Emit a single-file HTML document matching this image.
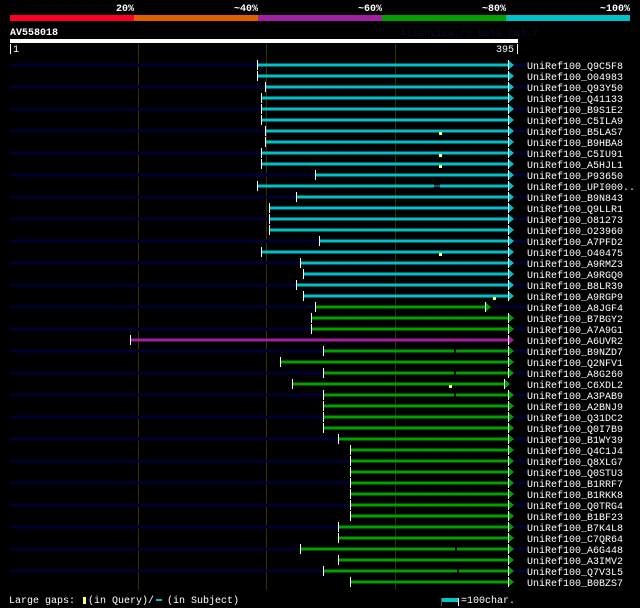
<!DOCTYPE html>
<html><head><meta charset="utf-8"><style>
html,body{margin:0;padding:0;background:#000;}
svg{display:block}
text{font-family:"Liberation Mono",monospace;font-size:10px;fill:#fff}
.b{font-weight:bold}
</style></head><body>
<svg width="640" height="608" xmlns="http://www.w3.org/2000/svg">
<rect width="640" height="608" fill="#000"/>
<text class="b" x="134" y="11" text-anchor="end">20%</text>
<text class="b" x="258" y="11" text-anchor="end">~40%</text>
<text class="b" x="382" y="11" text-anchor="end">~60%</text>
<text class="b" x="506" y="11" text-anchor="end">~80%</text>
<text class="b" x="630" y="11" text-anchor="end">~100%</text>
<rect x="10" y="15" width="124" height="6" fill="#ff0022"/>
<rect x="134" y="15" width="124" height="6" fill="#e06000"/>
<rect x="258" y="15" width="124" height="6" fill="#a020a0"/>
<rect x="382" y="15" width="124" height="6" fill="#00a000"/>
<rect x="506" y="15" width="124" height="6" fill="#00c0c8"/>
<text class="b" x="10" y="35">AV558018</text>
<text x="400" y="36" style="fill:#0a0a2a">AlignView.rn Beta rel.7</text>
<rect x="10" y="39" width="508" height="4" fill="#fff"/>
<rect x="10" y="44" width="1" height="10" fill="#fff"/>
<text x="13" y="52">1</text>
<text x="496" y="52">395</text>
<rect x="517" y="44" width="1" height="10" fill="#fff"/>
<g fill="#333300">
<rect x="138" y="44" width="1" height="546"/>
<rect x="266" y="44" width="1" height="546"/>
<rect x="395" y="44" width="1" height="546"/>
</g>
<g>
<rect x="10" y="63.5" width="247" height="3" fill="#000033"/><rect x="514" y="63.5" width="13" height="3" fill="#000033"/><rect x="257" y="63.5" width="251" height="3" fill="#00c0c8"/><polygon points="508,60 514,65 508,70" fill="#00c0c8"/><rect x="257" y="60" width="1" height="10" fill="#fff"/><rect x="508" y="60" width="1" height="10" fill="#fff"/><text x="527" y="69">UniRef100_Q9C5F8</text>
<rect x="257" y="74.5" width="251" height="3" fill="#00c0c8"/><polygon points="508,71 514,76 508,81" fill="#00c0c8"/><rect x="257" y="71" width="1" height="10" fill="#fff"/><rect x="508" y="71" width="1" height="10" fill="#fff"/><text x="527" y="80">UniRef100_O04983</text>
<rect x="10" y="85.5" width="255" height="3" fill="#000033"/><rect x="514" y="85.5" width="13" height="3" fill="#000033"/><rect x="265" y="85.5" width="243" height="3" fill="#00c0c8"/><polygon points="508,82 514,87 508,92" fill="#00c0c8"/><rect x="265" y="82" width="1" height="10" fill="#fff"/><rect x="508" y="82" width="1" height="10" fill="#fff"/><text x="527" y="91">UniRef100_Q93Y50</text>
<rect x="261" y="96.5" width="247" height="3" fill="#00c0c8"/><polygon points="508,93 514,98 508,103" fill="#00c0c8"/><rect x="261" y="93" width="1" height="10" fill="#fff"/><rect x="508" y="93" width="1" height="10" fill="#fff"/><text x="527" y="102">UniRef100_Q41133</text>
<rect x="10" y="107.5" width="251" height="3" fill="#000033"/><rect x="514" y="107.5" width="13" height="3" fill="#000033"/><rect x="261" y="107.5" width="247" height="3" fill="#00c0c8"/><polygon points="508,104 514,109 508,114" fill="#00c0c8"/><rect x="261" y="104" width="1" height="10" fill="#fff"/><rect x="508" y="104" width="1" height="10" fill="#fff"/><text x="527" y="113">UniRef100_B9S1E2</text>
<rect x="261" y="118.5" width="247" height="3" fill="#00c0c8"/><polygon points="508,115 514,120 508,125" fill="#00c0c8"/><rect x="261" y="115" width="1" height="10" fill="#fff"/><rect x="508" y="115" width="1" height="10" fill="#fff"/><text x="527" y="124">UniRef100_C5ILA9</text>
<rect x="10" y="129.5" width="255" height="3" fill="#000033"/><rect x="514" y="129.5" width="13" height="3" fill="#000033"/><rect x="265" y="129.5" width="243" height="3" fill="#00c0c8"/><polygon points="508,126 514,131 508,136" fill="#00c0c8"/><rect x="265" y="126" width="1" height="10" fill="#fff"/><rect x="508" y="126" width="1" height="10" fill="#fff"/><text x="527" y="135">UniRef100_B5LAS7</text>
<rect x="265" y="140.5" width="243" height="3" fill="#00c0c8"/><polygon points="508,137 514,142 508,147" fill="#00c0c8"/><rect x="265" y="137" width="1" height="10" fill="#fff"/><rect x="508" y="137" width="1" height="10" fill="#fff"/><text x="527" y="146">UniRef100_B9HBA8</text>
<rect x="10" y="151.5" width="251" height="3" fill="#000033"/><rect x="514" y="151.5" width="13" height="3" fill="#000033"/><rect x="261" y="151.5" width="247" height="3" fill="#00c0c8"/><polygon points="508,148 514,153 508,158" fill="#00c0c8"/><rect x="261" y="148" width="1" height="10" fill="#fff"/><rect x="508" y="148" width="1" height="10" fill="#fff"/><text x="527" y="157">UniRef100_C5IU91</text>
<rect x="261" y="162.5" width="247" height="3" fill="#00c0c8"/><polygon points="508,159 514,164 508,169" fill="#00c0c8"/><rect x="261" y="159" width="1" height="10" fill="#fff"/><rect x="508" y="159" width="1" height="10" fill="#fff"/><text x="527" y="168">UniRef100_A5HJL1</text>
<rect x="10" y="173.5" width="305" height="3" fill="#000033"/><rect x="514" y="173.5" width="13" height="3" fill="#000033"/><rect x="315" y="173.5" width="193" height="3" fill="#00c0c8"/><polygon points="508,170 514,175 508,180" fill="#00c0c8"/><rect x="315" y="170" width="1" height="10" fill="#fff"/><rect x="508" y="170" width="1" height="10" fill="#fff"/><text x="527" y="179">UniRef100_P93650</text>
<rect x="257" y="184.5" width="251" height="3" fill="#00c0c8"/><polygon points="508,181 514,186 508,191" fill="#00c0c8"/><rect x="257" y="181" width="1" height="10" fill="#fff"/><rect x="508" y="181" width="1" height="10" fill="#fff"/><text x="527" y="190">UniRef100_UPI000..</text>
<rect x="10" y="195.5" width="286" height="3" fill="#000033"/><rect x="514" y="195.5" width="13" height="3" fill="#000033"/><rect x="296" y="195.5" width="212" height="3" fill="#00c0c8"/><polygon points="508,192 514,197 508,202" fill="#00c0c8"/><rect x="296" y="192" width="1" height="10" fill="#fff"/><rect x="508" y="192" width="1" height="10" fill="#fff"/><text x="527" y="201">UniRef100_B9N843</text>
<rect x="269" y="206.5" width="239" height="3" fill="#00c0c8"/><polygon points="508,203 514,208 508,213" fill="#00c0c8"/><rect x="269" y="203" width="1" height="10" fill="#fff"/><rect x="508" y="203" width="1" height="10" fill="#fff"/><text x="527" y="212">UniRef100_Q9LLR1</text>
<rect x="10" y="217.5" width="259" height="3" fill="#000033"/><rect x="514" y="217.5" width="13" height="3" fill="#000033"/><rect x="269" y="217.5" width="239" height="3" fill="#00c0c8"/><polygon points="508,214 514,219 508,224" fill="#00c0c8"/><rect x="269" y="214" width="1" height="10" fill="#fff"/><rect x="508" y="214" width="1" height="10" fill="#fff"/><text x="527" y="223">UniRef100_O81273</text>
<rect x="269" y="228.5" width="239" height="3" fill="#00c0c8"/><polygon points="508,225 514,230 508,235" fill="#00c0c8"/><rect x="269" y="225" width="1" height="10" fill="#fff"/><rect x="508" y="225" width="1" height="10" fill="#fff"/><text x="527" y="234">UniRef100_O23960</text>
<rect x="10" y="239.5" width="309" height="3" fill="#000033"/><rect x="514" y="239.5" width="13" height="3" fill="#000033"/><rect x="319" y="239.5" width="189" height="3" fill="#00c0c8"/><polygon points="508,236 514,241 508,246" fill="#00c0c8"/><rect x="319" y="236" width="1" height="10" fill="#fff"/><rect x="508" y="236" width="1" height="10" fill="#fff"/><text x="527" y="245">UniRef100_A7PFD2</text>
<rect x="261" y="250.5" width="247" height="3" fill="#00c0c8"/><polygon points="508,247 514,252 508,257" fill="#00c0c8"/><rect x="261" y="247" width="1" height="10" fill="#fff"/><rect x="508" y="247" width="1" height="10" fill="#fff"/><text x="527" y="256">UniRef100_O40475</text>
<rect x="10" y="261.5" width="290" height="3" fill="#000033"/><rect x="514" y="261.5" width="13" height="3" fill="#000033"/><rect x="300" y="261.5" width="208" height="3" fill="#00c0c8"/><polygon points="508,258 514,263 508,268" fill="#00c0c8"/><rect x="300" y="258" width="1" height="10" fill="#fff"/><rect x="508" y="258" width="1" height="10" fill="#fff"/><text x="527" y="267">UniRef100_A9RMZ3</text>
<rect x="303" y="272.5" width="205" height="3" fill="#00c0c8"/><polygon points="508,269 514,274 508,279" fill="#00c0c8"/><rect x="303" y="269" width="1" height="10" fill="#fff"/><rect x="508" y="269" width="1" height="10" fill="#fff"/><text x="527" y="278">UniRef100_A9RGQ0</text>
<rect x="10" y="283.5" width="286" height="3" fill="#000033"/><rect x="514" y="283.5" width="13" height="3" fill="#000033"/><rect x="296" y="283.5" width="212" height="3" fill="#00c0c8"/><polygon points="508,280 514,285 508,290" fill="#00c0c8"/><rect x="296" y="280" width="1" height="10" fill="#fff"/><rect x="508" y="280" width="1" height="10" fill="#fff"/><text x="527" y="289">UniRef100_B8LR39</text>
<rect x="303" y="294.5" width="205" height="3" fill="#00c0c8"/><polygon points="508,291 514,296 508,301" fill="#00c0c8"/><rect x="303" y="291" width="1" height="10" fill="#fff"/><rect x="508" y="291" width="1" height="10" fill="#fff"/><text x="527" y="300">UniRef100_A9RGP9</text>
<rect x="10" y="305.5" width="305" height="3" fill="#000033"/><rect x="491" y="305.5" width="36" height="3" fill="#000033"/><rect x="315" y="305.5" width="170" height="3" fill="#00a000"/><polygon points="485,302 491,307 485,312" fill="#00a000"/><rect x="315" y="302" width="1" height="10" fill="#fff"/><rect x="485" y="302" width="1" height="10" fill="#fff"/><text x="527" y="311">UniRef100_A8JGF4</text>
<rect x="311" y="316.5" width="197" height="3" fill="#00a000"/><polygon points="508,313 514,318 508,323" fill="#00a000"/><rect x="311" y="313" width="1" height="10" fill="#fff"/><rect x="508" y="313" width="1" height="10" fill="#fff"/><text x="527" y="322">UniRef100_B7BGY2</text>
<rect x="10" y="327.5" width="301" height="3" fill="#000033"/><rect x="514" y="327.5" width="13" height="3" fill="#000033"/><rect x="311" y="327.5" width="197" height="3" fill="#00a000"/><polygon points="508,324 514,329 508,334" fill="#00a000"/><rect x="311" y="324" width="1" height="10" fill="#fff"/><rect x="508" y="324" width="1" height="10" fill="#fff"/><text x="527" y="333">UniRef100_A7A9G1</text>
<rect x="130" y="338.5" width="378" height="3" fill="#a020a0"/><polygon points="508,335 514,340 508,345" fill="#a020a0"/><rect x="130" y="335" width="1" height="10" fill="#fff"/><rect x="508" y="335" width="1" height="10" fill="#fff"/><text x="527" y="344">UniRef100_A6UVR2</text>
<rect x="10" y="349.5" width="313" height="3" fill="#000033"/><rect x="514" y="349.5" width="13" height="3" fill="#000033"/><rect x="323" y="349.5" width="185" height="3" fill="#00a000"/><polygon points="508,346 514,351 508,356" fill="#00a000"/><rect x="323" y="346" width="1" height="10" fill="#fff"/><rect x="508" y="346" width="1" height="10" fill="#fff"/><text x="527" y="355">UniRef100_B9NZD7</text>
<rect x="280" y="360.5" width="228" height="3" fill="#00a000"/><polygon points="508,357 514,362 508,367" fill="#00a000"/><rect x="280" y="357" width="1" height="10" fill="#fff"/><rect x="508" y="357" width="1" height="10" fill="#fff"/><text x="527" y="366">UniRef100_Q2NFV1</text>
<rect x="10" y="371.5" width="313" height="3" fill="#000033"/><rect x="514" y="371.5" width="13" height="3" fill="#000033"/><rect x="323" y="371.5" width="185" height="3" fill="#00a000"/><polygon points="508,368 514,373 508,378" fill="#00a000"/><rect x="323" y="368" width="1" height="10" fill="#fff"/><rect x="508" y="368" width="1" height="10" fill="#fff"/><text x="527" y="377">UniRef100_A8G260</text>
<rect x="292" y="382.5" width="212" height="3" fill="#00a000"/><polygon points="504,379 510,384 504,389" fill="#00a000"/><rect x="292" y="379" width="1" height="10" fill="#fff"/><rect x="504" y="379" width="1" height="10" fill="#fff"/><text x="527" y="388">UniRef100_C6XDL2</text>
<rect x="10" y="393.5" width="313" height="3" fill="#000033"/><rect x="514" y="393.5" width="13" height="3" fill="#000033"/><rect x="323" y="393.5" width="185" height="3" fill="#00a000"/><polygon points="508,390 514,395 508,400" fill="#00a000"/><rect x="323" y="390" width="1" height="10" fill="#fff"/><rect x="508" y="390" width="1" height="10" fill="#fff"/><text x="527" y="399">UniRef100_A3PAB9</text>
<rect x="323" y="404.5" width="185" height="3" fill="#00a000"/><polygon points="508,401 514,406 508,411" fill="#00a000"/><rect x="323" y="401" width="1" height="10" fill="#fff"/><rect x="508" y="401" width="1" height="10" fill="#fff"/><text x="527" y="410">UniRef100_A2BNJ9</text>
<rect x="10" y="415.5" width="313" height="3" fill="#000033"/><rect x="514" y="415.5" width="13" height="3" fill="#000033"/><rect x="323" y="415.5" width="185" height="3" fill="#00a000"/><polygon points="508,412 514,417 508,422" fill="#00a000"/><rect x="323" y="412" width="1" height="10" fill="#fff"/><rect x="508" y="412" width="1" height="10" fill="#fff"/><text x="527" y="421">UniRef100_Q31DC2</text>
<rect x="323" y="426.5" width="185" height="3" fill="#00a000"/><polygon points="508,423 514,428 508,433" fill="#00a000"/><rect x="323" y="423" width="1" height="10" fill="#fff"/><rect x="508" y="423" width="1" height="10" fill="#fff"/><text x="527" y="432">UniRef100_Q0I7B9</text>
<rect x="10" y="437.5" width="328" height="3" fill="#000033"/><rect x="514" y="437.5" width="13" height="3" fill="#000033"/><rect x="338" y="437.5" width="170" height="3" fill="#00a000"/><polygon points="508,434 514,439 508,444" fill="#00a000"/><rect x="338" y="434" width="1" height="10" fill="#fff"/><rect x="508" y="434" width="1" height="10" fill="#fff"/><text x="527" y="443">UniRef100_B1WY39</text>
<rect x="350" y="448.5" width="158" height="3" fill="#00a000"/><polygon points="508,445 514,450 508,455" fill="#00a000"/><rect x="350" y="445" width="1" height="10" fill="#fff"/><rect x="508" y="445" width="1" height="10" fill="#fff"/><text x="527" y="454">UniRef100_Q4C1J4</text>
<rect x="10" y="459.5" width="340" height="3" fill="#000033"/><rect x="514" y="459.5" width="13" height="3" fill="#000033"/><rect x="350" y="459.5" width="158" height="3" fill="#00a000"/><polygon points="508,456 514,461 508,466" fill="#00a000"/><rect x="350" y="456" width="1" height="10" fill="#fff"/><rect x="508" y="456" width="1" height="10" fill="#fff"/><text x="527" y="465">UniRef100_Q8XLG7</text>
<rect x="350" y="470.5" width="158" height="3" fill="#00a000"/><polygon points="508,467 514,472 508,477" fill="#00a000"/><rect x="350" y="467" width="1" height="10" fill="#fff"/><rect x="508" y="467" width="1" height="10" fill="#fff"/><text x="527" y="476">UniRef100_Q0STU3</text>
<rect x="10" y="481.5" width="340" height="3" fill="#000033"/><rect x="514" y="481.5" width="13" height="3" fill="#000033"/><rect x="350" y="481.5" width="158" height="3" fill="#00a000"/><polygon points="508,478 514,483 508,488" fill="#00a000"/><rect x="350" y="478" width="1" height="10" fill="#fff"/><rect x="508" y="478" width="1" height="10" fill="#fff"/><text x="527" y="487">UniRef100_B1RRF7</text>
<rect x="350" y="492.5" width="158" height="3" fill="#00a000"/><polygon points="508,489 514,494 508,499" fill="#00a000"/><rect x="350" y="489" width="1" height="10" fill="#fff"/><rect x="508" y="489" width="1" height="10" fill="#fff"/><text x="527" y="498">UniRef100_B1RKK8</text>
<rect x="10" y="503.5" width="340" height="3" fill="#000033"/><rect x="514" y="503.5" width="13" height="3" fill="#000033"/><rect x="350" y="503.5" width="158" height="3" fill="#00a000"/><polygon points="508,500 514,505 508,510" fill="#00a000"/><rect x="350" y="500" width="1" height="10" fill="#fff"/><rect x="508" y="500" width="1" height="10" fill="#fff"/><text x="527" y="509">UniRef100_Q0TRG4</text>
<rect x="350" y="514.5" width="158" height="3" fill="#00a000"/><polygon points="508,511 514,516 508,521" fill="#00a000"/><rect x="350" y="511" width="1" height="10" fill="#fff"/><rect x="508" y="511" width="1" height="10" fill="#fff"/><text x="527" y="520">UniRef100_B1BF23</text>
<rect x="10" y="525.5" width="328" height="3" fill="#000033"/><rect x="514" y="525.5" width="13" height="3" fill="#000033"/><rect x="338" y="525.5" width="170" height="3" fill="#00a000"/><polygon points="508,522 514,527 508,532" fill="#00a000"/><rect x="338" y="522" width="1" height="10" fill="#fff"/><rect x="508" y="522" width="1" height="10" fill="#fff"/><text x="527" y="531">UniRef100_B7K4L8</text>
<rect x="338" y="536.5" width="170" height="3" fill="#00a000"/><polygon points="508,533 514,538 508,543" fill="#00a000"/><rect x="338" y="533" width="1" height="10" fill="#fff"/><rect x="508" y="533" width="1" height="10" fill="#fff"/><text x="527" y="542">UniRef100_C7QR64</text>
<rect x="10" y="547.5" width="290" height="3" fill="#000033"/><rect x="514" y="547.5" width="13" height="3" fill="#000033"/><rect x="300" y="547.5" width="208" height="3" fill="#00a000"/><polygon points="508,544 514,549 508,554" fill="#00a000"/><rect x="300" y="544" width="1" height="10" fill="#fff"/><rect x="508" y="544" width="1" height="10" fill="#fff"/><text x="527" y="553">UniRef100_A6G448</text>
<rect x="338" y="558.5" width="170" height="3" fill="#00a000"/><polygon points="508,555 514,560 508,565" fill="#00a000"/><rect x="338" y="555" width="1" height="10" fill="#fff"/><rect x="508" y="555" width="1" height="10" fill="#fff"/><text x="527" y="564">UniRef100_A3IMV2</text>
<rect x="10" y="569.5" width="313" height="3" fill="#000033"/><rect x="514" y="569.5" width="13" height="3" fill="#000033"/><rect x="323" y="569.5" width="185" height="3" fill="#00a000"/><polygon points="508,566 514,571 508,576" fill="#00a000"/><rect x="323" y="566" width="1" height="10" fill="#fff"/><rect x="508" y="566" width="1" height="10" fill="#fff"/><text x="527" y="575">UniRef100_Q7V3L5</text>
<rect x="350" y="580.5" width="158" height="3" fill="#00a000"/><polygon points="508,577 514,582 508,587" fill="#00a000"/><rect x="350" y="577" width="1" height="10" fill="#fff"/><rect x="508" y="577" width="1" height="10" fill="#fff"/><text x="527" y="586">UniRef100_B0BZS7</text>
</g>
<g fill="#ffff80">
<rect x="439" y="132" width="3" height="3"/><rect x="439" y="154" width="3" height="3"/><rect x="439" y="165" width="3" height="3"/>
<rect x="439" y="253" width="3" height="3"/><rect x="493" y="297" width="3" height="3"/><rect x="449" y="385" width="3" height="3"/>
</g>
<g fill="#000">
<rect x="434" y="184" width="6" height="4"/><rect x="454" y="349" width="2" height="4"/><rect x="454" y="371" width="2" height="4"/><rect x="454" y="393" width="2" height="4"/><rect x="455" y="547" width="2" height="4"/><rect x="457" y="569" width="2" height="4"/>
</g>
<rect x="434" y="185.5" width="6" height="1" fill="#00c0c8"/>
<text x="9" y="603">Large gaps:</text>
<rect x="83" y="597" width="3" height="7" fill="#ffff80"/>
<text x="88" y="603">(in Query)/</text>
<rect x="156" y="599" width="6" height="2" fill="#00c0c8"/>
<text x="167" y="603">(in Subject)</text>
<rect x="441" y="598" width="1" height="8" fill="#555"/>
<rect x="442" y="598" width="16" height="4" fill="#00c0c8"/>
<rect x="458" y="598" width="1" height="8" fill="#fff"/>
<text x="461" y="603">=100char.</text>
</svg>
</body></html>
